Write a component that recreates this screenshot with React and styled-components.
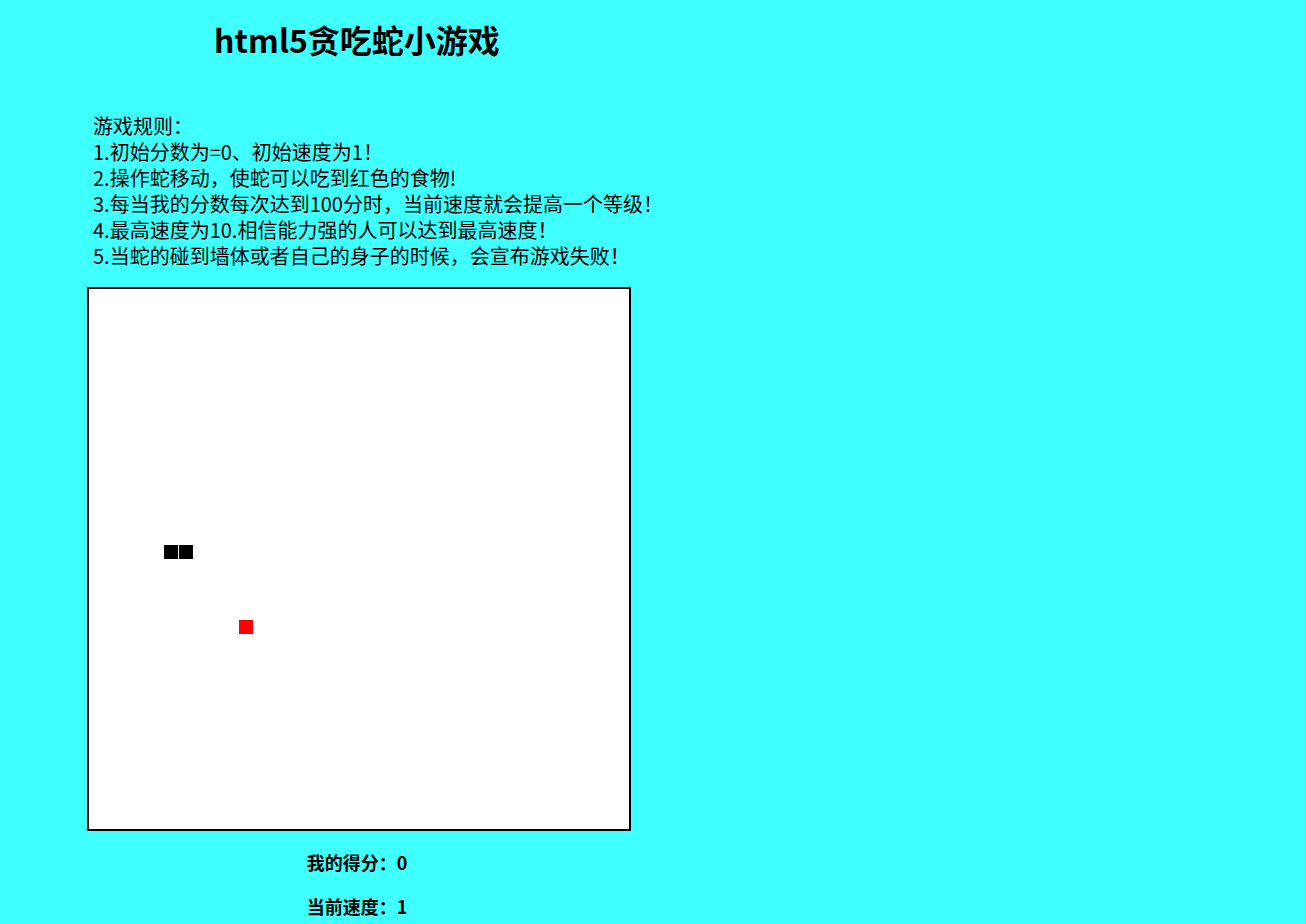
import React from "react";
import styled, { createGlobalStyle } from "styled-components";

const Global = createGlobalStyle`
  html, body {
    margin: 0;
    padding: 0;
    background: #40ffff;
  }
  body {
    font-family: "Noto Sans CJK SC", "Noto Sans", sans-serif;
    color: #000;
  }
`;

const Page = styled.div`
  width: 1306px;
  min-height: 924px;
  padding-left: 87px;
  box-sizing: border-box;
  overflow: hidden;
`;

const Title = styled.h1`
  width: 540px;
  margin: 16px 0 0;
  font-size: 32px;
  line-height: 46px;
  font-weight: 700;
  text-align: center;
`;

const Rules = styled.div`
  margin-top: 51px;
  padding-left: 6px;
  font-size: 20px;
  line-height: 26px;
`;

const RuleLine = styled.div`
  white-space: nowrap;
`;

const Board = styled.div`
  position: relative;
  margin-top: 18px;
  width: 540px;
  height: 540px;
  border: 2px solid #000;
  background: #fff;
`;

const Cell = styled.div`
  position: absolute;
  width: 14px;
  height: 14px;
  background: ${(p) => (p.$food ? "#ff0000" : "#000")};
`;

const Stat = styled.p`
  width: 540px;
  margin: 18px 0 0;
  font-size: 18px;
  line-height: 26px;
  font-weight: 700;
  text-align: center;
`;

const rules = [
  "游戏规则：",
  "1.初始分数为=0、初始速度为1！",
  "2.操作蛇移动，使蛇可以吃到红色的食物!",
  "3.每当我的分数每次达到100分时，当前速度就会提高一个等级！",
  "4.最高速度为10.相信能力强的人可以达到最高速度！",
  "5.当蛇的碰到墙体或者自己的身子的时候，会宣布游戏失败！",
];

const snake = [
  { x: 75, y: 256 },
  { x: 90, y: 256 },
];
const food = { x: 150, y: 331 };

export default function App() {
  return (
    <>
      <Global />
      <Page>
        <Title>html5贪吃蛇小游戏</Title>
        <Rules>
          {rules.map((r) => (
            <RuleLine key={r}>{r}</RuleLine>
          ))}
        </Rules>
        <Board>
          {snake.map((s, i) => (
            <Cell key={i} style={{ left: s.x, top: s.y }} />
          ))}
          <Cell $food style={{ left: food.x, top: food.y }} />
        </Board>
        <Stat>我的得分：0</Stat>
        <Stat>当前速度：1</Stat>
      </Page>
    </>
  );
}
